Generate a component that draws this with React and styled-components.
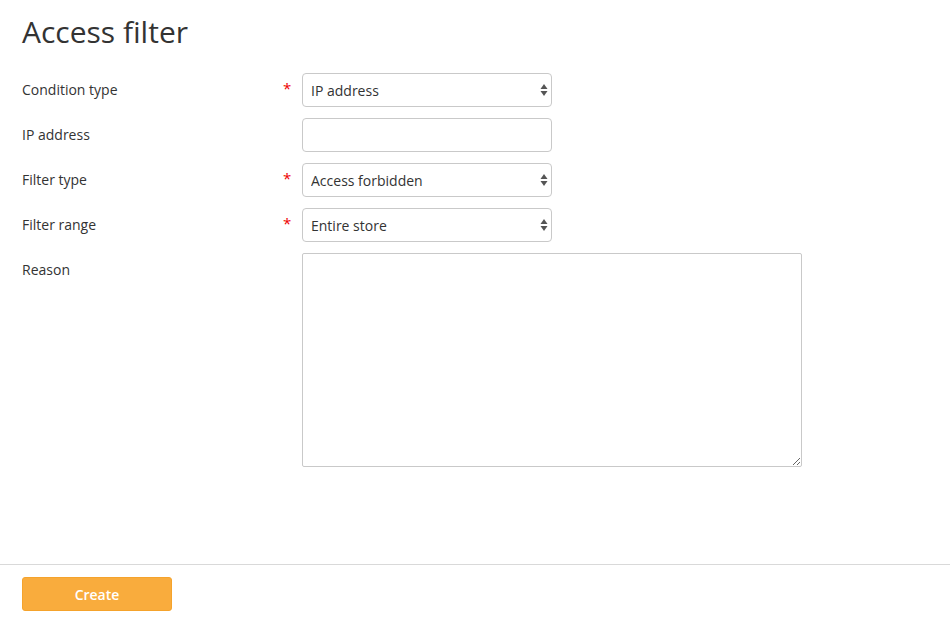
import React from 'react';
import styled, { createGlobalStyle } from 'styled-components';

const GlobalStyle = createGlobalStyle`
  html, body {
    margin: 0;
    padding: 0;
    background: #fff;
  }
  body {
    font-family: "Open Sans", "Liberation Sans", Arial, sans-serif;
    color: #333;
  }
`;

const rows = [
  { label: 'Condition type', required: true, kind: 'select', value: 'IP address' },
  { label: 'IP address', required: false, kind: 'input', value: '' },
  { label: 'Filter type', required: true, kind: 'select', value: 'Access forbidden' },
  { label: 'Filter range', required: true, kind: 'select', value: 'Entire store' },
  { label: 'Reason', required: false, kind: 'textarea', value: '' },
];

const SelectArrows = () => (
  <ArrowIcon width="8" height="14" viewBox="0 0 8 14">
    <path d="M4 1 L7.5 6 L0.5 6 Z" fill="#555" />
    <path d="M4 13 L7.5 8 L0.5 8 Z" fill="#555" />
  </ArrowIcon>
);

function FormRow({ row }) {
  let control;
  if (row.kind === 'select') {
    control = (
      <SelectWrap>
        <Select defaultValue={row.value}>
          <option>{row.value}</option>
        </Select>
        <SelectArrows />
      </SelectWrap>
    );
  } else if (row.kind === 'input') {
    control = <TextInput type="text" defaultValue={row.value} />;
  } else {
    control = <TextArea defaultValue={row.value} />;
  }
  return (
    <Row>
      <Label>{row.label}</Label>
      <Required>{row.required ? '*' : ''}</Required>
      {control}
    </Row>
  );
}

export default function App() {
  return (
    <>
      <GlobalStyle />
      <Page>
        <Content>
          <Title>Access filter</Title>
          <Form>
            {rows.map(r => <FormRow key={r.label} row={r} />)}
          </Form>
        </Content>
        <Footer>
          <CreateButton type="button">Create</CreateButton>
        </Footer>
      </Page>
    </>
  );
}

const Page = styled.div`
  display: flex;
  flex-direction: column;
  height: 100vh;
`;

const Content = styled.div`
  flex: 1;
  padding: 14px 22px 0;
`;

const Title = styled.h1`
  margin: 0 0 23px;
  font-size: 30px;
  line-height: 36px;
  font-weight: 400;
  color: #333;
`;

const Form = styled.div`
  display: flex;
  flex-direction: column;
  gap: 11px;
`;

const Row = styled.div`
  display: grid;
  grid-template-columns: 258px 22px auto;
  align-items: start;
`;

const Label = styled.div`
  font-size: 14px;
  line-height: 34px;
  color: #333;
`;

const Required = styled.div`
  color: #e00;
  font-size: 15px;
  line-height: 30px;
  padding-left: 3px;
`;

const SelectWrap = styled.div`
  position: relative;
  width: 250px;
  height: 34px;
`;

const Select = styled.select`
  appearance: none;
  -webkit-appearance: none;
  width: 100%;
  height: 34px;
  box-sizing: border-box;
  border: 1px solid #c9c9c9;
  border-radius: 4px;
  background: #fff;
  padding: 0 24px 0 8px;
  font-family: inherit;
  font-size: 14px;
  color: #333;
  outline: none;
`;

const ArrowIcon = styled.svg`
  position: absolute;
  right: 4px;
  top: 10px;
  pointer-events: none;
`;

const TextInput = styled.input`
  width: 250px;
  height: 34px;
  box-sizing: border-box;
  border: 1px solid #c9c9c9;
  border-radius: 4px;
  padding: 0 8px;
  font-family: inherit;
  font-size: 14px;
  color: #333;
  outline: none;
`;

const TextArea = styled.textarea`
  width: 500px;
  height: 214px;
  box-sizing: border-box;
  border: 1px solid #c9c9c9;
  border-radius: 2px;
  padding: 6px 8px;
  font-family: inherit;
  font-size: 14px;
  color: #333;
  outline: none;
  resize: both;
`;

const Footer = styled.div`
  border-top: 1px solid #d9d9d9;
  padding: 12px 22px 27px;
`;

const CreateButton = styled.button`
  width: 150px;
  height: 34px;
  border: 1px solid #f5a32c;
  border-radius: 3px;
  background: #f9ac3d;
  color: #fff;
  font-family: inherit;
  font-size: 14px;
  font-weight: 600;
  cursor: pointer;
`;
